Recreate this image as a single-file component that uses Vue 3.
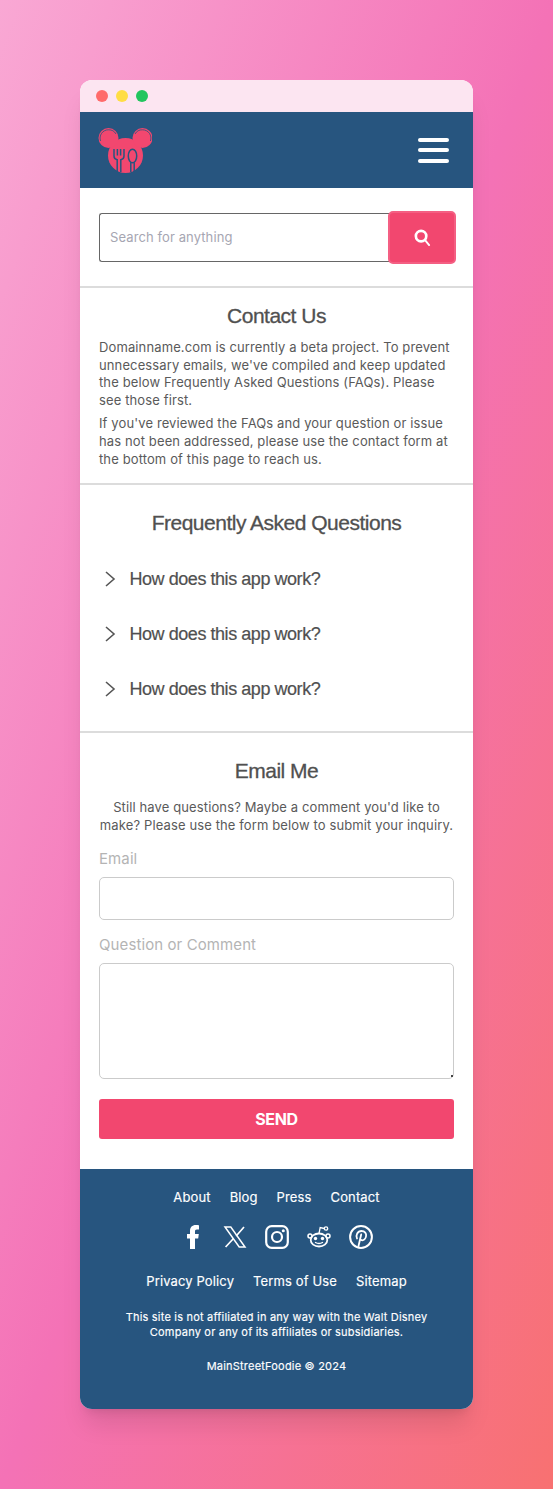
<template>
  <div class="page">
    <div class="window">
      <div class="titlebar">
        <span class="dot red"></span>
        <span class="dot yellow"></span>
        <span class="dot green"></span>
      </div>

      <header class="site-header">
        <svg class="logo" viewBox="0 0 54 46" xmlns="http://www.w3.org/2000/svg">
          <circle cx="27.500" cy="28.500" r="17.500" fill="#f2476f" />
          <circle cx="10.500" cy="11" r="10" fill="#f2476f" />
          <circle cx="44.500" cy="11" r="10" fill="#f2476f" />
          <path d="M2.600 14A8.300 8.300 0 0 1 10.500 2.800 8.300 8.300 0 0 1 18 7" fill="none" stroke="#27557f" stroke-width="0.800" />
          <path d="M37 7A8.300 8.300 0 0 1 44.500 2.800 8.300 8.300 0 0 1 52.400 14" fill="none" stroke="#27557f" stroke-width="0.800" />
          <path d="M16 22v7q0 3 3.200 3.700V45M26 22v7q0 3-3.200 3.700V45M19.400 22v6.500M22.600 22v6.500" fill="none" stroke="#27557f" stroke-width="1.500" />
          <ellipse cx="34.500" cy="29" rx="4.200" ry="6.800" fill="#f2476f" stroke="#27557f" stroke-width="1.500" />
          <path d="M32.800 35.500V45M36.200 35.500V45" fill="none" stroke="#27557f" stroke-width="1.500" />
        </svg>
        <button class="menu-btn" aria-label="Menu">
          <span></span><span></span><span></span>
        </button>
      </header>

      <section class="search-section">
        <div class="search">
          <input class="search-input" type="text" placeholder="Search for anything" />
          <button class="search-btn" aria-label="Search">
            <svg viewBox="0 0 20 20" fill="none" xmlns="http://www.w3.org/2000/svg">
              <circle cx="8.500" cy="8.500" r="5.500" stroke="#fff" stroke-width="2.800" />
              <path d="M12.500 12.500L17 18" stroke="#fff" stroke-width="2" stroke-linecap="round" />
            </svg>
          </button>
        </div>
      </section>

      <section class="contact">
        <h2>Contact Us</h2>
        <p>Domainname.com is currently a beta project. To prevent unnecessary emails, we've compiled and keep updated the below Frequently Asked Questions (FAQs). Please see those first.</p>
        <p>If you've reviewed the FAQs and your question or issue has not been addressed, please use the contact form at the bottom of this page to reach us.</p>
      </section>

      <section class="faq">
        <h2>Frequently Asked Questions</h2>
        <div v-for="(q, i) in questions" :key="i" class="faq-row">
          <svg viewBox="0 0 12 16" fill="none" xmlns="http://www.w3.org/2000/svg">
            <path d="M2 1l8 7-8 7" stroke="#555" stroke-width="1.600" />
          </svg>
          <span>{{ q }}</span>
        </div>
      </section>

      <section class="email">
        <h2>Email Me</h2>
        <p>Still have questions? Maybe a comment you'd like to make? Please use the form below to submit your inquiry.</p>
        <label for="email">Email</label>
        <input id="email" type="text" />
        <label for="comment">Question or Comment</label>
        <div class="area-wrap">
          <textarea id="comment"></textarea>
          <i class="grip"></i>
        </div>
        <button class="send">SEND</button>
      </section>

      <footer class="site-footer">
        <nav class="links">
          <a v-for="l in topLinks" :key="l">{{ l }}</a>
        </nav>
        <div class="social">
          <svg viewBox="0 0 24 24" xmlns="http://www.w3.org/2000/svg">
            <path d="M9 24V13.500H6V9h3V6.200C9 2.200 11.200 0 14.800 0c1.400 0 2.600.1 3.200.2v4.200h-2.100c-1.500 0-1.900.8-1.900 2V9h3.800l-.6 4.500H14V24z" fill="#fff" />
          </svg>
          <svg viewBox="0 0 24 24" xmlns="http://www.w3.org/2000/svg">
            <path d="M2 2h5.800l14.200 20h-5.800z" fill="none" stroke="#fff" stroke-width="1.500" />
            <path d="M21 2l-7.800 9M10.500 13.500L2.600 22" fill="none" stroke="#fff" stroke-width="1.700" />
          </svg>
          <svg viewBox="0 0 24 24" fill="none" xmlns="http://www.w3.org/2000/svg">
            <rect x="1.200" y="1.200" width="21.600" height="21.600" rx="5.500" stroke="#fff" stroke-width="2.200" />
            <circle cx="12" cy="12" r="5" stroke="#fff" stroke-width="2.200" />
            <circle cx="18.300" cy="5.700" r="1.500" fill="#fff" />
          </svg>
          <svg viewBox="0 0 24 24" fill="none" xmlns="http://www.w3.org/2000/svg">
            <ellipse cx="12" cy="15" rx="8.300" ry="6.500" stroke="#fff" stroke-width="1.800" />
            <circle cx="3" cy="11" r="2" stroke="#fff" stroke-width="1.500" />
            <circle cx="21" cy="11" r="2" stroke="#fff" stroke-width="1.500" />
            <circle cx="19" cy="3.500" r="1.700" stroke="#fff" stroke-width="1.300" />
            <path d="M12 8.500l1.200-6 4 1" stroke="#fff" stroke-width="1.300" />
            <circle cx="8.500" cy="13.500" r="1.700" fill="#fff" />
            <circle cx="15.500" cy="13.500" r="1.700" fill="#fff" />
            <path d="M8.500 17.500q3.500 2 7 0" stroke="#fff" stroke-width="1.400" stroke-linecap="round" />
          </svg>
          <svg viewBox="0 0 24 24" fill="none" xmlns="http://www.w3.org/2000/svg">
            <circle cx="12" cy="12" r="10.900" stroke="#fff" stroke-width="2" />
            <path d="M8 13.500C6.500 10 8.500 6 12.500 6c3.500 0 5 2.500 4.600 5-.4 3-2.500 4.700-4.500 4.200-1.200-.3-1.500-1.500-1.500-1.500M12.200 9.500L9.500 21" stroke="#fff" stroke-width="1.800" stroke-linecap="round" />
          </svg>
        </div>
        <nav class="links legal">
          <a v-for="l in legalLinks" :key="l">{{ l }}</a>
        </nav>
        <p class="disclaimer">This site is not affiliated in any way with the Walt Disney Company or any of its affiliates or subsidiaries.</p>
        <p class="copy">MainStreetFoodie © 2024</p>
      </footer>
    </div>
  </div>
</template>

<script setup>
const questions = ['How does this app work?', 'How does this app work?', 'How does this app work?']
const topLinks = ['About', 'Blog', 'Press', 'Contact']
const legalLinks = ['Privacy Policy', 'Terms of Use', 'Sitemap']
</script>

<style>
html,
body {
  margin: 0;
}
</style>

<style scoped>
* {
  box-sizing: border-box;
}

.page {
  width: 553px;
  height: 1489px;
  padding: 80px;
  background: linear-gradient(to bottom right, #f9a8d4 0%, #f472b6 50%, #f87171 100%);
  font-family: Inter, "Liberation Sans", sans-serif;
}

.window {
  width: 393px;
  height: 1329px;
  border-radius: 12px;
  overflow: hidden;
  background: #fff;
  display: flex;
  flex-direction: column;
  box-shadow: 0 20px 25px -5px rgba(0, 0, 0, 0.1), 0 8px 10px -6px rgba(0, 0, 0, 0.1);
}

.titlebar {
  height: 32px;
  flex-shrink: 0;
  display: flex;
  align-items: center;
  gap: 8px;
  padding-left: 16px;
  background: #fce5f1;
}

.dot {
  width: 12px;
  height: 12px;
  border-radius: 50%;
}

.red { background: #ff6b6b; }
.yellow { background: #ffdd44; }
.green { background: #22c55e; }

.site-header {
  height: 76px;
  flex-shrink: 0;
  display: flex;
  align-items: center;
  justify-content: space-between;
  padding: 0 24px 0 18px;
  background: #27557f;
}

.logo {
  width: 54px;
  height: 46px;
  display: block;
}

.menu-btn {
  width: 31px;
  height: 25px;
  padding: 0;
  border: none;
  background: none;
  display: flex;
  flex-direction: column;
  justify-content: space-between;
}

.menu-btn span {
  display: block;
  height: 4px;
  border-radius: 2px;
  background: #fff;
}

.search-section {
  height: 100px;
  flex-shrink: 0;
  display: flex;
  align-items: center;
  padding: 0 17px 0 19px;
  border-bottom: 2px solid #dcdcdc;
}

.search {
  display: flex;
  align-items: center;
  width: 100%;
}

.search-input {
  flex: 1;
  min-width: 0;
  height: 49px;
  padding: 0 10px;
  border: 1px solid #666;
  border-right: none;
  border-radius: 3px 0 0 3px;
  font: 13px Inter, sans-serif;
  letter-spacing: 0.1px;
  outline: none;
}

.search-input::placeholder {
  color: #a6a6b2;
}

.search-btn {
  width: 68px;
  height: 53px;
  flex-shrink: 0;
  margin-left: -1px;
  padding: 0;
  display: flex;
  align-items: center;
  justify-content: center;
  background: #f2476f;
  border: 2px solid #f45f83;
  border-radius: 5px;
}

.search-btn svg {
  width: 19px;
  height: 19px;
}

h2 {
  margin: 0;
  font-family: "Liberation Sans", Arial, sans-serif;
  font-size: 21px;
  font-weight: 400;
  letter-spacing: -0.5px;
  -webkit-text-stroke: 0.3px #505050;
  color: #505050;
  text-align: center;
}

.contact {
  height: 197px;
  flex-shrink: 0;
  padding: 16px 19px 0;
  border-bottom: 2px solid #dcdcdc;
  color: #5a5a5a;
}

.contact h2 {
  line-height: 24px;
  margin-bottom: 11px;
}

.contact p {
  margin: 0 0 6px;
  font-size: 13px;
  line-height: 17.600px;
  letter-spacing: 0.12px;
}

.faq {
  height: 248px;
  flex-shrink: 0;
  padding: 25px 19px 0;
  border-bottom: 2px solid #dcdcdc;
}

.faq h2 {
  line-height: 26px;
  margin-bottom: 15px;
}

.faq-row {
  height: 55px;
  display: flex;
  align-items: center;
  gap: 13.500px;
  padding-left: 5px;
  font-family: "Liberation Sans", Arial, sans-serif;
  font-size: 18px;
  letter-spacing: -0.45px;
  color: #505050;
  -webkit-text-stroke: 0.2px #505050;
}

.faq-row span {
  padding-top: 1px;
}

.faq-row svg {
  width: 12px;
  height: 16px;
  flex-shrink: 0;
}

.email {
  flex: 1;
  display: flex;
  flex-direction: column;
  padding: 25px 19px 0;
}

.email h2 {
  line-height: 26px;
  margin-bottom: 14px;
}

.email p {
  margin: 0 0 16px;
  font-size: 13px;
  line-height: 18px;
  letter-spacing: 0.12px;
  text-align: center;
  color: #5a5a5a;
}

label {
  font-size: 15px;
  line-height: 18px;
  color: #b4b4b4;
  margin-bottom: 9px;
  letter-spacing: 0.1px;
}

.email input,
.email textarea {
  display: block;
  width: 100%;
  border: 1px solid #cbcbcb;
  border-radius: 5px;
  outline: none;
  background: #fff;
}

.email input {
  height: 43px;
  margin-bottom: 16px;
}

.area-wrap {
  position: relative;
  margin-bottom: 20px;
}

.email textarea {
  height: 116px;
  resize: none;
}

.grip {
  position: absolute;
  right: 1px;
  bottom: 2px;
  width: 2px;
  height: 2px;
  background: #444;
}

.send {
  height: 40px;
  flex-shrink: 0;
  border: none;
  border-radius: 3px;
  background: #f2476f;
  color: #fff;
  font-family: Inter, sans-serif;
  font-size: 16px;
  font-weight: 700;
  letter-spacing: -0.3px;
}

.site-footer {
  height: 240px;
  flex-shrink: 0;
  padding-top: 20px;
  background: #27557f;
  color: #fff;
  text-align: center;
  -webkit-text-stroke: 0.15px #fff;
}

.links {
  display: flex;
  justify-content: center;
  gap: 19px;
  font-size: 13px;
  line-height: 16px;
  font-weight: 400;
  letter-spacing: 0.13px;
}

.social {
  display: flex;
  justify-content: center;
  align-items: center;
  gap: 18px;
  margin: 20px 0 24px;
  height: 24px;
}

.social svg {
  width: 24px;
  height: 24px;
}

.disclaimer {
  margin: 21px 36px 0;
  font-size: 11px;
  line-height: 15px;
  font-weight: 400;
  letter-spacing: 0.2px;
}

.copy {
  margin: 19px 0 0;
  font-size: 11px;
  line-height: 15px;
  font-weight: 400;
  letter-spacing: 0.2px;
}
</style>
